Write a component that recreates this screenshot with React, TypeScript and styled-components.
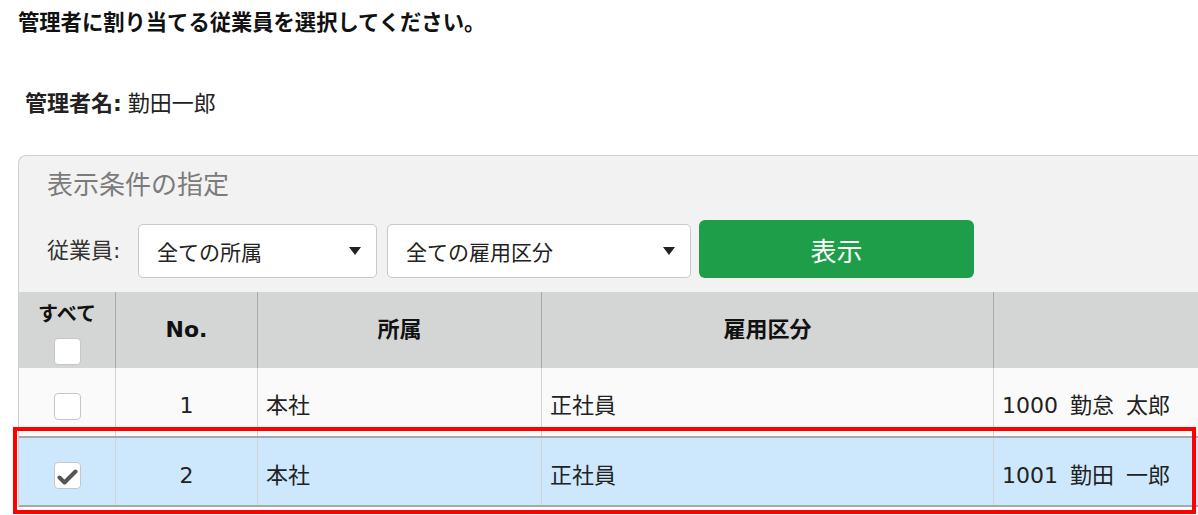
import React from "react";
import styled, { createGlobalStyle } from "styled-components";

const GlobalStyle = createGlobalStyle`
  html, body { margin: 0; padding: 0; background: #fff; overflow: hidden; }
  body { font-family: "DejaVu Sans", "Noto Sans CJK JP", sans-serif; color: #222; }
`;

const Page = styled.div`
  width: 1198px;
  height: 515px;
  overflow: hidden;
  padding: 8px 0 0 18px;
  box-sizing: border-box;
`;

const Title = styled.h1`
  margin: 0;
  font-size: 21.3px;
  line-height: 30px;
  font-weight: 700;
  color: #111;
`;

const Manager = styled.div`
  margin-top: 51px;
  padding-left: 7px;
  font-size: 22px;
  line-height: 30px;
  color: #222;
`;

const ManagerLabel = styled.span`
  font-weight: 700;
  margin-right: 6px;
`;

const Panel = styled.section`
  margin-top: 36px;
  width: 1260px;
  border: 1px solid #cfcfcf;
  border-bottom: none;
  border-radius: 8px 8px 0 0;
  background: #f2f2f2;
`;

const PanelTitle = styled.div`
  padding: 12px 0 0 28px;
  font-size: 26px;
  line-height: 34px;
  color: #7b7b7b;
`;

const FilterRow = styled.div`
  display: flex;
  align-items: flex-end;
  margin-top: 18px;
  padding-left: 28px;
`;

const FilterLabel = styled.div`
  flex: 0 0 91px;
  font-size: 22px;
  line-height: 54px;
  color: #333;
`;

const Select = styled.div<{ $w: number; $gap: number }>`
  display: flex;
  align-items: center;
  justify-content: space-between;
  width: ${(p) => p.$w}px;
  height: 54px;
  margin-right: ${(p) => p.$gap}px;
  box-sizing: border-box;
  padding: 0 15px 0 18px;
  border: 1px solid #c9c9c9;
  border-radius: 5px;
  background: #fff;
  font-size: 21px;
  color: #222;
`;

const Caret = styled.span`
  width: 0;
  height: 0;
  border-left: 6px solid transparent;
  border-right: 6px solid transparent;
  border-top: 8px solid #222;
`;

const ShowButton = styled.button`
  width: 275px;
  height: 58px;
  border: none;
  border-radius: 6px;
  background: #1f9e4a;
  color: #fff;
  font-family: inherit;
  font-size: 26px;
  padding: 0;
`;

const Table = styled.div`
  margin-top: 14px;
`;

const Row = styled.div<{ $kind: "head" | "body" | "selected" }>`
  position: relative;
  display: grid;
  grid-template-columns: 97px 142px 284px 452px 284px;
  height: ${(p) => (p.$kind === "head" ? 76 : p.$kind === "selected" ? 71 : 68)}px;
  box-sizing: border-box;
  background: ${(p) =>
    p.$kind === "head" ? "#d4d6d5" : p.$kind === "selected" ? "#cde8fc" : "#fafafa"};
  border-top: ${(p) => (p.$kind === "selected" ? "2px solid #a9a9a9" : "none")};
  border-bottom: ${(p) => (p.$kind === "selected" ? "2px solid #a9a9a9" : "none")};
  font-weight: ${(p) => (p.$kind === "head" ? 700 : 400)};
  color: ${(p) => (p.$kind === "head" ? "#111" : "#222")};
`;

const Cell = styled.div<{ $center?: boolean; $head?: boolean }>`
  display: flex;
  flex-direction: column;
  align-items: ${(p) => (p.$center ? "center" : "flex-start")};
  justify-content: center;
  gap: 12px;
  box-sizing: border-box;
  padding: ${(p) => (p.$head ? "0" : "8px 0 0 0")};
  padding-left: ${(p) => (p.$center ? 0 : 8)}px;
  border-right: 1px solid ${(p) => (p.$head ? "#a9a9a9" : "#d3d3d3")};
  font-size: 22px;
  line-height: 28px;
  word-spacing: 5px;
`;

const SmallHead = styled.span`
  font-size: 20px;
  line-height: 24px;
  margin-top: 6px;
`;

const Check = styled.span`
  display: flex;
  align-items: center;
  justify-content: center;
  width: 27px;
  height: 27px;
  box-sizing: border-box;
  border: 1px solid #c6c6c6;
  border-radius: 4px;
  background: #fff;
`;

const Highlight = styled.div`
  position: absolute;
  left: -6px;
  top: -11px;
  width: 1183px;
  height: 87px;
  box-sizing: border-box;
  border: 4px solid #ff0000;
  pointer-events: none;
`;

const CheckMark = () => (
  <svg width="22" height="22" viewBox="0 0 22 22">
    <polyline
      points="3.5,12.5 8.5,17.5 19.5,6.5"
      fill="none"
      stroke="#555"
      strokeWidth="4"
      strokeLinecap="round"
      strokeLinejoin="round"
    />
  </svg>
);

const rows = [
  { no: 1, dept: "本社", type: "正社員", name: "1000 勤怠 太郎", checked: false },
  { no: 2, dept: "本社", type: "正社員", name: "1001 勤田 一郎", checked: true },
];

export default function App() {
  return (
    <>
      <GlobalStyle />
      <Page>
        <Title>管理者に割り当てる従業員を選択してください。</Title>
        <Manager>
          <ManagerLabel>管理者名:</ManagerLabel>勤田一郎
        </Manager>
        <Panel>
          <PanelTitle>表示条件の指定</PanelTitle>
          <FilterRow>
            <FilterLabel>従業員:</FilterLabel>
            <Select $w={239} $gap={10}>
              全ての所属
              <Caret />
            </Select>
            <Select $w={304} $gap={8}>
              全ての雇用区分
              <Caret />
            </Select>
            <ShowButton>表示</ShowButton>
          </FilterRow>
          <Table>
            <Row $kind="head">
              <Cell $center $head>
                <SmallHead>すべて</SmallHead>
                <Check />
              </Cell>
              <Cell $center $head>No.</Cell>
              <Cell $center $head>所属</Cell>
              <Cell $center $head>雇用区分</Cell>
              <Cell $center $head></Cell>
            </Row>
            {rows.map((r) => (
              <Row key={r.no} $kind={r.checked ? "selected" : "body"}>
                <Cell $center>
                  <Check>{r.checked && <CheckMark />}</Check>
                </Cell>
                <Cell $center>{r.no}</Cell>
                <Cell>{r.dept}</Cell>
                <Cell>{r.type}</Cell>
                <Cell>{r.name}</Cell>
                {r.checked && <Highlight />}
              </Row>
            ))}
          </Table>
        </Panel>
      </Page>
    </>
  );
}
